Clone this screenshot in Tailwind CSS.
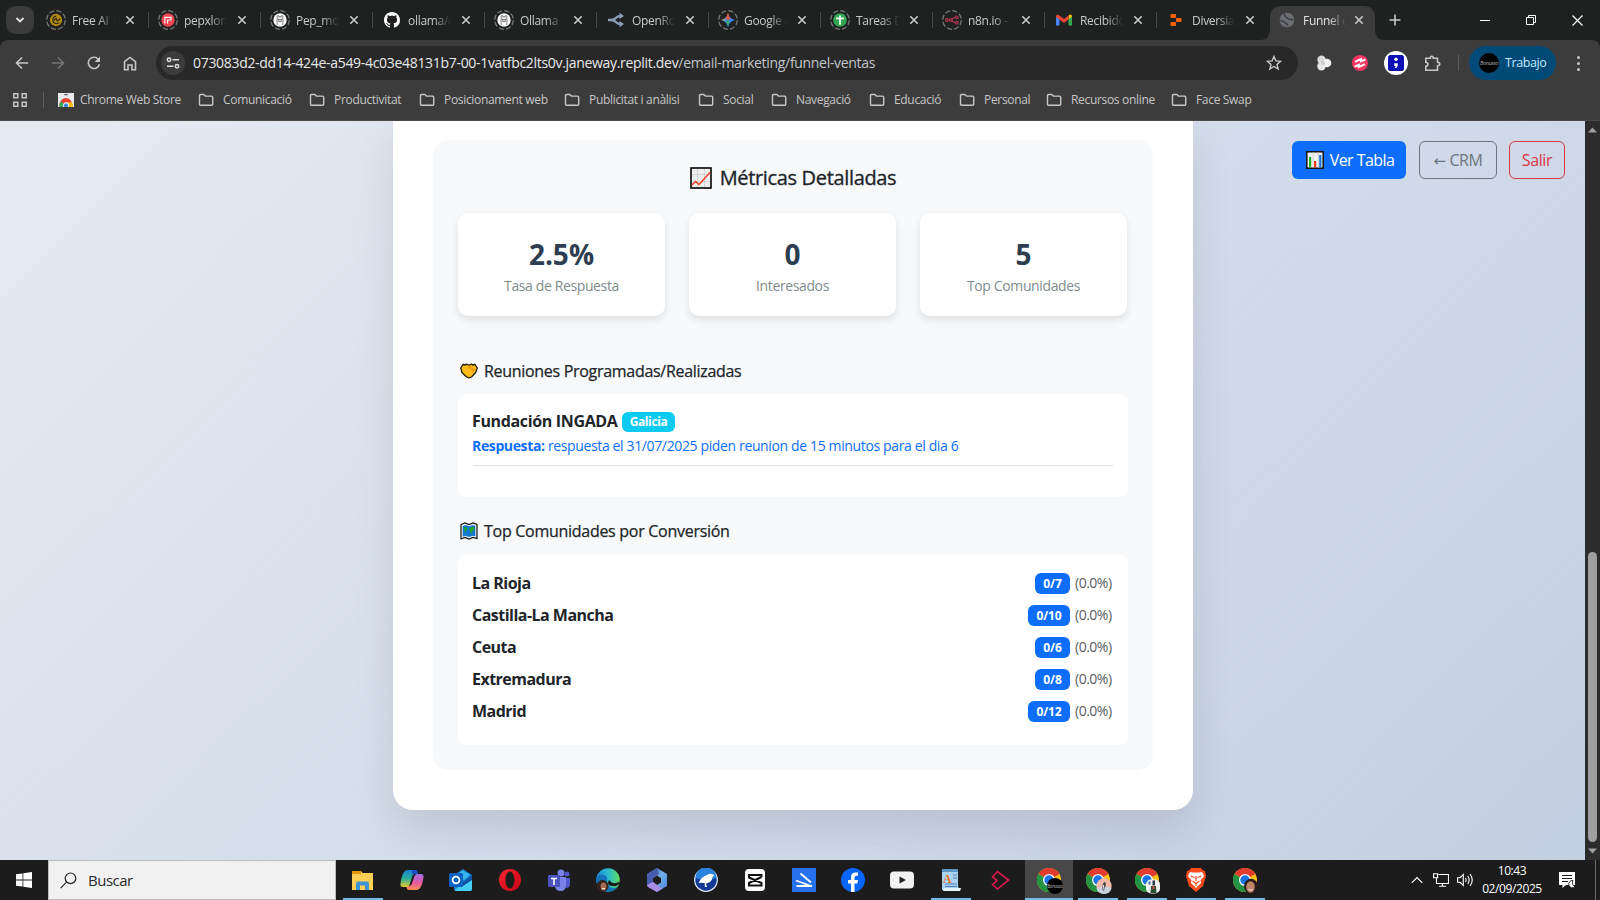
<!DOCTYPE html>
<html lang="es">
<head>
<meta charset="utf-8">
<title>Funnel de Ventas</title>
<script src="https://cdn.jsdelivr.net/npm/@tailwindcss/browser@4"></script>
</head>
<body class="w-[1600px] h-[900px] overflow-hidden flex flex-col font-['Open_Sans',sans-serif] tracking-tight bg-[#3c3c3c]">

<svg class="absolute" width="0" height="0">
  <defs>
    <symbol id="ring" viewBox="0 0 20 20"><circle cx="10" cy="10" r="9.3" fill="none" stroke="#7b7d7c" stroke-width="1.2" stroke-dasharray="5.2 2.1"/></symbol>
    <symbol id="x" viewBox="0 0 10 10"><path d="M1.3 1.3l7.4 7.4M8.7 1.3L1.3 8.7" stroke="currentColor" stroke-width="1.6" fill="none"/></symbol>
    <symbol id="folder" viewBox="0 0 16 14"><path d="M1.500 11.200V2.600Q1.500 1.500 2.600 1.500H5.800L7.400 3.100H13.600Q14.700 3.100 14.700 4.200V11.200Q14.700 12.300 13.600 12.300H2.600Q1.500 12.300 1.500 11.200Z" fill="none" stroke="#c7c7c7" stroke-width="1.400"/></symbol>
    <symbol id="chrome" viewBox="0 0 24 24">
      <circle cx="12" cy="12" r="12" fill="#fbc116"/>
      <path d="M12 12L1.600 6A12 12 0 0 1 22.400 6Z" fill="#e33b2e"/>
      <path d="M1.600 6A12 12 0 0 0 12 24L17.200 15L12 12Z" fill="#229342"/>
      <circle cx="12" cy="12" r="6" fill="#fff"/><circle cx="12" cy="12" r="4.700" fill="#1a73e8"/>
    </symbol>
    <symbol id="llama" viewBox="0 0 16 16"><circle cx="8" cy="8" r="7.600" fill="#fff"/><path d="M4.800 13.500V11Q4 9.500 4.900 7.500Q4.300 3 5.600 2.700Q6.600 2.700 6.700 4.700Q8 4.200 9.300 4.700Q9.400 2.700 10.400 2.700Q11.700 3 11.100 7.500Q12 9.500 11.200 11V13.500" fill="none" stroke="#555" stroke-width=".9"/><ellipse cx="8" cy="8.600" rx="2.200" ry="1.500" fill="none" stroke="#555" stroke-width=".9"/><path d="M8 8.200v.9M5.600 7.200h.8M9.600 7.200h.8" stroke="#333"/></symbol>
    <linearGradient id="gem" x1="0" y1="0" x2="1" y2="1"><stop offset=".2" stop-color="#f0b323"/><stop offset=".45" stop-color="#3f8cf3"/><stop offset="1" stop-color="#2f7bf0"/></linearGradient>
    <linearGradient id="edge" x1="0" y1="0" x2="1" y2="0"><stop offset="0" stop-color="#1a8fdc"/><stop offset=".55" stop-color="#2cc0c8"/><stop offset="1" stop-color="#5fdc5a"/></linearGradient>
    <linearGradient id="m365" x1="0" y1="0" x2="1" y2="1"><stop offset="0" stop-color="#3a4aa8"/><stop offset=".5" stop-color="#6fb0ea"/><stop offset="1" stop-color="#4a7fd8"/></linearGradient>
    <linearGradient id="copA" x1="0" y1="0" x2="0" y2="1"><stop offset="0" stop-color="#1b7fd8"/><stop offset=".5" stop-color="#29b19a"/><stop offset="1" stop-color="#e8c92c"/></linearGradient>
    <linearGradient id="copB" x1="0" y1="0" x2="0" y2="1"><stop offset="0" stop-color="#a070ea"/><stop offset=".55" stop-color="#e85aa0"/><stop offset="1" stop-color="#f7904a"/></linearGradient>
    <linearGradient id="opera" x1="0" y1="0" x2="1" y2="1"><stop offset="0" stop-color="#ff2a3a"/><stop offset=".5" stop-color="#e0101f"/><stop offset="1" stop-color="#c70c1c"/></linearGradient>
  </defs>
</svg>

<!-- Tab strip -->
<div class="h-10 shrink-0 bg-[#1f2120] flex items-stretch text-[#c9cac9]">
  <div class="w-[37px] pl-1.5 pt-1.5"><div class="w-7 h-7 rounded-[9px] bg-[#3a3b3a] flex items-center justify-center"><svg width="10" height="8" viewBox="0 0 10 8"><path d="M1.500 2L5 5.500L8.500 2" fill="none" stroke="#e3e3e3" stroke-width="1.800"/></svg></div></div>
  <div id="tabs" class="flex"></div>
  <div class="w-[26px] ml-[7px] flex items-center justify-center"><svg width="12" height="12" viewBox="0 0 12 12"><path d="M6 .5v11M.5 6h11" stroke="#c9cac9" stroke-width="1.600"/></svg></div>
  <div class="flex-1"></div>
  <div class="flex w-[138px] text-white">
    <div class="w-[46px] flex items-center justify-center"><div class="w-[10px] h-px bg-white"></div></div>
    <div class="w-[46px] flex items-center justify-center"><svg width="10" height="10" viewBox="0 0 10 10" fill="none" stroke="#fff"><path d="M.5 2.500h7v7h-7zM2.500 2.500V.5h7v7h-2"/></svg></div>
    <div class="w-[46px] flex items-center justify-center"><svg width="11" height="11" viewBox="0 0 11 11"><path d="M.5 .5l10 10M10.500 .5l-10 10" stroke="#fff" stroke-width="1.200"/></svg></div>
  </div>
</div>

<!-- Toolbar -->
<div class="bg-[#1f2120] shrink-0"><div class="h-[46px] flex items-center bg-[#3c3c3c] rounded-t-lg">
  <div class="w-[156px] pl-1 flex">
    <div class="w-9 flex justify-center"><svg width="14" height="14" viewBox="0 0 14 14" fill="none" stroke="#c7c7c7" stroke-width="1.600"><path d="M13.200 7H2M7 1.500L1.500 7L7 12.500"/></svg></div>
    <div class="w-9 flex justify-center"><svg width="14" height="14" viewBox="0 0 14 14" fill="none" stroke="#757575" stroke-width="1.600"><path d="M.8 7H12M7 1.500L12.500 7L7 12.500"/></svg></div>
    <div class="w-9 flex justify-center"><svg width="14" height="14" viewBox="0 0 14 14"><path d="M12.400 8.200A5.600 5.600 0 1 1 11 3" fill="none" stroke="#c7c7c7" stroke-width="1.600"/><path d="M13 .6V6H7.600Z" fill="#c7c7c7"/></svg></div>
    <div class="w-9 flex justify-center"><svg width="14" height="15" viewBox="0 0 14 15" fill="none" stroke="#c7c7c7" stroke-width="1.600"><path d="M1.500 13.700V5.700L7 1.400L12.500 5.700V13.700H9V9H5V13.700Z"/></svg></div>
  </div>
  <div class="w-[1142px] h-[34px] rounded-full bg-[#282828] flex items-center pl-[5px] pr-4">
    <div class="w-6 h-6 rounded-full bg-[#3c3c3c] flex items-center justify-center"><svg width="14" height="12" viewBox="0 0 14 12" fill="none" stroke="#dedede" stroke-width="1.500"><circle cx="3" cy="2.700" r="1.700"/><path d="M6.500 2.700H13M1 9.200H7.500"/><circle cx="11" cy="9.200" r="1.700"/></svg></div>
    <div class="ml-2 text-[14px] leading-5 whitespace-nowrap text-[#c2c5c9] tracking-[-0.31px]"><span class="text-[#e8e8e8]">073083d2-dd14-424e-a549-4c03e48131b7-00-1vatfbc2lts0v.janeway.replit.dev</span>/email-marketing/funnel-ventas</div>
    <svg class="ml-auto" width="16" height="16" viewBox="0 0 16 16"><path d="M8 1.500L9.900 5.900L14.600 6.300L11 9.400L12.100 14L8 11.500L3.900 14L5 9.400L1.400 6.300L6.100 5.900Z" fill="none" stroke="#c7c7c7" stroke-width="1.400"/></svg>
  </div>
  <div class="flex items-center pl-2">
    <div class="w-9 flex justify-center"><svg width="16" height="16" viewBox="0 0 16 16"><circle cx="5.500" cy="4.800" r="4.200" fill="#dadada"/><circle cx="5.500" cy="11.200" r="4.200" fill="#e6e6e6"/><circle cx="11" cy="8" r="4.300" fill="#f2f2f2"/><circle cx="7" cy="8" r="2" fill="#c9c9c9"/></svg></div>
    <div class="w-9 flex justify-center"><svg width="16" height="16" viewBox="0 0 16 16"><circle cx="8" cy="8" r="8" fill="#f6365f"/><path d="M3 6.800L9 4V6.300L13.500 4.500M2.500 11.700L7 9.700V12L13 9.200" fill="none" stroke="#fff" stroke-width="2"/></svg></div>
    <div class="w-9 flex justify-center"><div class="w-6 h-6 rounded-full bg-white flex items-center justify-center"><svg width="16" height="16" viewBox="0 0 16 16"><rect width="16" height="16" rx="2.500" fill="#0c10b4"/><circle cx="8" cy="4.300" r="1.700" fill="#fff"/><path d="M6.300 8.300H9.700V10.500Q9.500 13 7 13.300V12Q8 11.700 8 11H6.300Z" fill="#fff"/></svg></div></div>
    <div class="w-9 flex justify-center"><svg width="17" height="17" viewBox="0 0 17 17"><path d="M1.800 3.300H6.300Q6.300 1.300 7.800 1.300T9.300 3.300H13.500V7.300Q15.700 7.300 15.700 9T13.500 10.700V15.200H1.800V11.200Q4 11 4 9.300T1.800 7.300Z" fill="none" stroke="#c7c7c7" stroke-width="1.600"/></svg></div>
  </div>
  <div class="w-px h-4 bg-[#5e5e5e] ml-2"></div>
  <div class="ml-[10px] w-[87px] h-[34px] rounded-full bg-[#004a77] flex items-center pl-2.5">
    <div class="w-5 h-5 rounded-full bg-black flex items-center justify-center text-[5.500px] italic text-[#aaa]">Bonusso</div>
    <div class="ml-1.5 text-[12.500px] leading-4 text-[#c2e7ff] tracking-[-0.4px]">Trabajo</div>
  </div>
  <div class="flex flex-col gap-[3px] ml-[21px]"><i class="w-[3px] h-[3px] rounded-full bg-[#c7c7c7]"></i><i class="w-[3px] h-[3px] rounded-full bg-[#c7c7c7]"></i><i class="w-[3px] h-[3px] rounded-full bg-[#c7c7c7]"></i></div>
</div></div>

<!-- Bookmarks bar -->
<div class="h-[35px] shrink-0 flex items-center pb-[7px] border-b border-[#4a4a4a] text-[12px] text-[#c7c7c7] whitespace-nowrap">
  <div class="w-[43px] pl-[13px]"><svg width="14" height="14" viewBox="0 0 14 14" fill="none" stroke="#c7c7c7" stroke-width="1.500"><path d="M.8 .8h4v4h-4zM9.200 .8h4v4h-4zM.8 9.200h4v4h-4zM9.200 9.200h4v4h-4z"/></svg></div>
  <div class="w-[15px]"><div class="w-px h-4 bg-[#5e5e5e]"></div></div>
  <div class="w-[140px] flex items-center gap-[6px] tracking-[-0.32px]"><svg width="16" height="14" viewBox="0 0 16 14"><rect width="16" height="14" fill="#e8eaed"/><rect x="6" y="1" width="4" height="1.200" rx=".6" fill="#5f6368"/><path d="M1.500 14A6.500 7.500 0 0 1 14 10L8 9.500Z" fill="#ea4335"/><path d="M1.500 14A7 7 0 0 1 3.500 8L7 14Z" fill="#34a853"/><path d="M9 9.500h5.200q.8 2 .8 4.500H9Z" fill="#fbbc04"/><circle cx="8" cy="12.500" r="2.700" fill="#4285f4" stroke="#fff"/></svg>Chrome Web Store</div>
  <div id="bookmarks" class="flex"></div>
</div>

<!-- Page viewport -->
<div class="h-[739px] shrink-0 flex">
  <main class="w-[1585px] h-full relative overflow-hidden flex justify-center items-start bg-[linear-gradient(135deg,#f5f7fa_0%,#c3cfe2_100%)] bg-[length:1585px_1800px] bg-bottom text-[#212529] tracking-normal">
    <div class="w-[800px] ml-px h-[689px] bg-white rounded-b-[20px] shadow-[0_20px_40px_rgba(0,0,0,0.1)] px-10 pt-[19px]">
      <section class="h-[630px] rounded-[15px] bg-[#f8f9fa] p-[25px] flex flex-col">
        <h5 class="h-6 flex items-center justify-center gap-2 text-[20px] font-medium leading-6 mt-px"><svg width="22" height="22" viewBox="0 0 22 22"><rect x="1" y="1" width="20" height="20" fill="#efefef" stroke="#111" stroke-width="1.700"/><path d="M7.500 2v18M14.500 2v18M2 7.500h18M2 14.500h18" stroke="#d2d2d2"/><path d="M2 18L5.500 14.500L9 17.500L20 5.500" fill="none" stroke="#f03a17" stroke-width="1.300"/></svg><span class="tracking-[-0.34px] [-webkit-text-stroke:0.35px]">Métricas Detalladas</span></h5>
        <div class="grid grid-cols-3 gap-6 mt-[23px] w-[669px]">
          <div class="h-[103px] rounded-[10px] bg-white shadow-[0_4px_8px_rgba(0,0,0,0.1)] pt-5 text-center"><div class="text-[28px] leading-[42px] font-bold text-[#2c3e50]">2.5%</div><div class="text-[14px] leading-[22px] text-[#7f8c8d] tracking-[-0.38px]">Tasa de Respuesta</div></div>
          <div class="h-[103px] rounded-[10px] bg-white shadow-[0_4px_8px_rgba(0,0,0,0.1)] pt-5 text-center"><div class="text-[28px] leading-[42px] font-bold text-[#2c3e50]">0</div><div class="text-[14px] leading-[22px] text-[#7f8c8d] tracking-[-0.38px]">Interesados</div></div>
          <div class="h-[103px] rounded-[10px] bg-white shadow-[0_4px_8px_rgba(0,0,0,0.1)] pt-5 text-center"><div class="text-[28px] leading-[42px] font-bold text-[#2c3e50]">5</div><div class="text-[14px] leading-[22px] text-[#7f8c8d] tracking-[-0.38px]">Top Comunidades</div></div>
        </div>
        <h6 class="mt-[45px] h-5 flex items-center gap-[6px] text-[16px] font-medium leading-5 pl-[2px]"><svg width="18" height="16" viewBox="0 0 18 16"><path d="M.7 5L3.200 1.200L5 2.300L6.500 1L9 2.300L11.500 1L13 2.300L14.800 1.200L17.300 5L15.700 9.500L11.500 14L9 15L6 13.500L2 9.500Z" fill="#fcbc1b" stroke="#1c1500" stroke-width="1.200" stroke-linejoin="round"/><path d="M9 3L15.500 6L13 9L9.500 5L7 6Z" fill="#f29b0c"/></svg><span class="tracking-[-0.3px] [-webkit-text-stroke:0.25px]">Reuniones Programadas/Realizadas</span></h6>
        <div class="mt-[13px] h-[103px] w-[670px] rounded-lg bg-white px-[15px] pt-[15px]">
          <div class="h-6 flex items-center"><b class="text-[16px] leading-6 tracking-[-0.35px] w-[150px] -ml-px whitespace-nowrap">Fundación INGADA</b><span class="w-[53px] h-5 mt-0.5 rounded-md bg-[#0dcaf0] text-white text-[12px] leading-5 font-bold text-center tracking-[-0.4px]">Galicia</span></div>
          <div class="text-[14px] leading-[21px] mt-[2px] -ml-px text-[#0d6efd] tracking-[-0.365px] whitespace-nowrap"><b>Respuesta:</b> respuesta el 31/07/2025 piden reunion de 15 minutos para el dia 6</div>
          <div class="mt-[9px] h-px bg-[#dee2e6]"></div>
        </div>
        <h6 class="mt-6 h-5 flex items-center gap-[6px] text-[16px] font-medium leading-5 pl-[2px]"><svg width="18" height="18" viewBox="0 0 18 18"><path d="M1 2.500L5 1L9 2.500L13 1L17 2.500V16.500L13 15.500L9 17L5 15.500L1 17Z" fill="#f4f4f4" stroke="#111" stroke-width="1.200"/><path d="M2.700 4L5.500 3L9 4.300L13 3L15.300 4V14.500L13 13.800L9 15L5 13.800L2.700 14.700Z" fill="#1277d3"/><path d="M4 5L7.500 5.500L7 8L5.500 9L6.500 12L4.500 9ZM9 6L14 4.500L14.500 8L12 9L12.500 12L10.500 11L10 8.500Z" fill="#1fa32c"/></svg><span class="tracking-[-0.28px] [-webkit-text-stroke:0.25px]">Top Comunidades por Conversión</span></h6>
        <div id="comunidades" class="mt-[14px] h-[190px] w-[670px] rounded-lg bg-white px-[15px] pt-3"></div>
      </section>
    </div>
    <div class="absolute right-5 top-5 flex h-[38px] text-[16px] leading-9 text-center whitespace-nowrap">
      <div class="w-[114px] pl-[2px] rounded-md bg-[#0d6efd] text-white flex items-center justify-center gap-1.5"><svg width="18" height="18" viewBox="0 0 18 18"><rect x=".8" y=".8" width="16.400" height="16.400" fill="#f3f3f3" stroke="#111" stroke-width="1.500"/><path d="M7 1.500v15M12.500 1.500v15" stroke="#d5d5d5"/><path d="M3 6h2.200v10.500H3z" fill="#16b31a"/><path d="M8 10h2.200v6.500H8z" fill="#f03a17"/><path d="M13.200 4h2.200v12.500h-2.200z" fill="#1673d8"/></svg><span class="tracking-[-0.55px]">Ver Tabla</span></div>
      <div class="w-[78px] ml-[13px] rounded-md border border-[#6c757d] text-[#6c757d] tracking-[-0.4px]"><span class="font-['DejaVu_Sans'] text-[15px]">←</span> CRM</div>
      <div class="w-[56px] ml-3 rounded-md border border-[#dc3545] text-[#dc3545] tracking-[-0.4px]">Salir</div>
    </div>
  </main>
  <div class="w-[15px] h-full bg-[#2c2c2c] flex flex-col items-center justify-between py-[6px]">
    <svg width="9" height="6" viewBox="0 0 9 6"><path d="M0 5.500L4.500 .5L9 5.500Z" fill="#9f9f9f"/></svg>
    <div class="flex-1 w-full flex flex-col items-center justify-end pb-[6px]"><div class="w-[9px] h-[290px] rounded-full bg-[#9f9f9f]"></div></div>
    <svg width="9" height="6" viewBox="0 0 9 6"><path d="M0 .5L4.500 5.500L9 .5Z" fill="#9f9f9f"/></svg>
  </div>
</div>

<!-- Taskbar -->
<div class="h-10 shrink-0 bg-[#1c1c1c] flex">
  <div class="w-12 flex items-center justify-center"><svg width="16" height="16" viewBox="0 0 16 16" fill="#fff"><path d="M0 2.300L6.500 1.400V7.600H0zM7.300 1.300L16 0V7.600H7.300zM0 8.400H6.500V14.600L0 13.700zM7.300 8.400H16V16L7.300 14.700z"/></svg></div>
  <div class="w-[288px] h-10 bg-[#f1f1f1] border border-[#bdbdbd] flex items-center pl-[11px] text-[15px] text-[#2b2b2b] tracking-[-0.5px]"><svg class="mr-[11px]" width="17" height="17" viewBox="0 0 17 17" fill="none" stroke="#222" stroke-width="1.200"><circle cx="10.500" cy="6.300" r="5.300"/><path d="M6.600 10.200L.6 16.200"/></svg>Buscar</div>
  <div id="apps" class="flex gap-px ml-[3px]"></div>
  <div class="flex-1"></div>
  <div class="flex items-center text-white">
    <svg width="12" height="8" viewBox="0 0 12 8"><path d="M.7 6.800L6 1.500L11.300 6.800" fill="none" stroke="#fff" stroke-width="1.200"/></svg>
    <svg class="ml-[10px]" width="16" height="14" viewBox="0 0 16 14" fill="none" stroke="#fff" stroke-width="1.100"><path d="M5.500 1.500H15.500V10.500H3.500V5M.6 .8H4.600V4.800H.6zM9.500 10.500V13M6 13.300H13"/></svg>
    <svg class="ml-2" width="17" height="14" viewBox="0 0 17 14" fill="none" stroke="#fff" stroke-width="1.100"><path d="M.6 4.700H3L6.300 1.500V12.500L3 9.300H.6ZM8.500 5Q9.800 7 8.500 9M10.800 3Q13.500 7 10.800 11M13 1Q17.500 7 13 13"/></svg>
    <div class="w-[62px] ml-[7px] flex flex-col items-center text-[12px] leading-[18px] tracking-[-0.4px]"><span>10:43</span><span>02/09/2025</span></div>
    <svg class="ml-[16px]" width="18" height="17" viewBox="0 0 18 17"><path d="M0 0H16V13H7L3.500 16V13H0Z" fill="#fff"/><path d="M3 3.500h10M3 6.500h10M3 9.500h6" stroke="#1c1c1c" stroke-width="1.200"/><path d="M14 8.500a3.700 3.700 0 1 0 2 6.300a4.500 4.500 0 0 1-2-6.300" fill="#fff" stroke="#1c1c1c" stroke-width=".9"/></svg>
    <div class="w-px h-10 bg-[#6a6a6a] ml-[18px] mr-1"></div>
  </div>
</div>

<script>
const ringed = (s) => '<svg class="absolute -left-0.5 -top-0.5" width="20" height="20"><use href="#ring"/></svg><div class="scale-[.88]">' + s + '</div>';
const tabs = [
  ['Free AI |', ringed('<svg width="16" height="16" viewBox="0 0 16 16"><circle cx="8" cy="8" r="7" fill="#b48a08"/><path d="M8.500 3.500A4.300 4.300 0 1 0 11.500 11M5.500 8.500L8 6L9.500 9L13 6.500" fill="none" stroke="#2b2500" stroke-width="1.300"/></svg>')],
  ['pepxlora', ringed('<svg width="16" height="16" viewBox="0 0 16 16"><circle cx="8" cy="8" r="7.600" fill="#ef4452"/><path d="M4.500 12V5H12M7.500 12V8H11.500V5" fill="none" stroke="#fff" stroke-width="1.300"/></svg>')],
  ['Pep_mod', ringed('<svg width="16" height="16"><use href="#llama"/></svg>')],
  ['ollama/o', '<svg width="16" height="16" viewBox="0 0 16 16"><path fill="#fff" d="M8 0C3.580 0 0 3.580 0 8c0 3.540 2.290 6.530 5.470 7.590.4.070.55-.17.55-.38 0-.19-.010-.82-.010-1.490-2.010.37-2.530-.49-2.690-.94-.09-.23-.48-.94-.82-1.130-.28-.15-.68-.52-.010-.53.63-.010 1.080.58 1.230.82.72 1.210 1.870.87 2.330.66.070-.52.28-.87.51-1.070-1.780-.2-3.640-.89-3.640-3.950 0-.87.31-1.590.82-2.150-.08-.2-.36-1.020.08-2.120 0 0 .67-.21 2.200.82.64-.18 1.320-.27 2-.27s1.360.09 2 .27c1.530-1.040 2.200-.82 2.200-.82.44 1.100.16 1.920.08 2.120.51.56.82 1.270.82 2.150 0 3.070-1.870 3.750-3.650 3.950.29.25.54.73.54 1.480 0 1.070-.010 1.930-.010 2.200 0 .21.15.46.55.38A8.010 8.010 0 0 0 16 8c0-4.420-3.580-8-8-8"/></svg>'],
  ['Ollama |', ringed('<svg width="16" height="16"><use href="#llama"/></svg>')],
  ['OpenRou', '<svg width="16" height="16" viewBox="0 0 16 16"><path d="M0 8H3Q6 8 8.500 5.500Q10 4 12.500 4M3 8Q6 8 8.500 10.500Q10 12 12.500 12" fill="none" stroke="#8e9fbc" stroke-width="2.300"/><path d="M11.500 .8L16 4L11.500 7ZM11.500 9L16 12L11.500 15.200Z" fill="#8e9fbc"/></svg>'],
  ['Google A', ringed('<svg width="16" height="16" viewBox="0 0 16 16"><path d="M8 0Q9.500 6.500 16 8Q9.500 9.500 8 16Q6.500 9.500 0 8Q6.500 6.500 8 0" fill="url(#gem)"/><path d="M8 0Q9 5 11 6.700L8 8L5.500 6.200Q7.300 4 8 0" fill="#ea5044"/><path d="M8 16Q7.200 11.500 5.500 9.800L8 8L10 10Q8.700 12 8 16" fill="#3aa657"/></svg>')],
  ['Tareas D', ringed('<svg width="16" height="16" viewBox="0 0 16 16"><circle cx="8" cy="8" r="7.800" fill="#2fa84f"/><path d="M8 3V13.500M3.500 6.200H12.500" stroke="#fff" stroke-width="2"/></svg>')],
  ['n8n.io - A', ringed('<svg width="16" height="16" viewBox="0 0 16 16" fill="none" stroke="#b0334f" stroke-width="1.400"><circle cx="2" cy="8" r="1.500"/><circle cx="6.500" cy="8" r="1.500"/><circle cx="13.500" cy="5" r="1.500"/><circle cx="13.500" cy="11" r="1.500"/><path d="M3.500 8h1.500M8 8Q9 5 12 5M8 8Q9 11 12 11"/></svg>')],
  ['Recibidos', '<svg width="16" height="16" viewBox="0 0 16 16"><path d="M0 3.500V13.500H3.500V6Z" fill="#4285f4"/><path d="M16 3.500V13.500H12.500V6Z" fill="#34a853"/><path d="M12.500 3.500L14 2.500Q16 2.500 16 4.500L12.500 7.500Z" fill="#fbbc04"/><path d="M0 4.500Q0 2.500 2 2.500L8 7L12.500 3.500V7.500L8 11L3.500 7.500L0 5Z" fill="#ea4335"/></svg>'],
  ['Diversia', '<svg width="16" height="16" viewBox="0 0 16 16" fill="#f26207"><rect x="2.500" y="2" width="5.500" height="4" rx=".8"/><rect x="8" y="6" width="5.500" height="4" rx=".8"/><rect x="2.500" y="10" width="5.500" height="4" rx=".8"/></svg>'],
  ['Funnel d', '<svg width="16" height="16" viewBox="0 0 16 16"><circle cx="8" cy="8" r="7.300" fill="#6b6e72"/><path d="M1.500 9Q5 8.500 6 11Q8.500 11 8.500 14M5.500 1.500Q5.500 5 8 5.500Q9 8 14.500 7.500" fill="none" stroke="#3f4144" stroke-width="1.700"/></svg>'],
];
document.getElementById('tabs').innerHTML = tabs.map(([t, icon], i) => {
  const active = i === 11;
  return `<div class="${active ? 'relative w-[105px] ml-px mt-1.5 rounded-t-[10px] bg-[#3c3c3c] pl-[9px] pb-1.5 flex items-center' : 'relative w-28 pl-[11px] flex items-center'}">
    <div class="relative w-4 h-4 shrink-0">${icon}</div>
    <div class="w-[43px] ml-2 overflow-hidden whitespace-nowrap text-[12px] leading-4 mt-px tracking-[-0.3px] mask-r-from-60% ${active ? 'text-[#e3e3e3]' : ''}">${t}</div>
    <svg class="shrink-0 ${active ? 'ml-2' : 'ml-[10px]'}" width="10" height="10"><use href="#x"/></svg>
    ${active ? '<svg class="absolute -left-2.5 bottom-0" width="10" height="10"><path d="M10 0V10H0Q10 10 10 0" fill="#3c3c3c"/></svg><svg class="absolute -right-2.5 bottom-0" width="10" height="10"><path d="M0 0V10H10Q0 10 0 0" fill="#3c3c3c"/></svg>' : i < 10 ? '<div class="absolute right-0 top-3 w-px h-4 bg-[#454746]"></div>' : ''}
  </div>`;
}).join('');

const marks = [['Comunicació',111],['Productivitat',110],['Posicionament web',145],['Publicitat i anàlisi',134],['Social',73],['Navegació',98],['Educació',90],['Personal',87],['Recursos online',125],['Face Swap',100]];
document.getElementById('bookmarks').innerHTML = marks.map(([t, w]) =>
  `<div class="flex items-center gap-[9px] tracking-[-0.32px]" style="width:${w}px"><svg width="16" height="14"><use href="#folder"/></svg>${t}</div>`).join('');

document.getElementById('comunidades').innerHTML = [['La Rioja','0/7'],['Castilla-La Mancha','0/10'],['Ceuta','0/6'],['Extremadura','0/8'],['Madrid','0/12']].map(([n, v]) =>
  `<div class="h-8 flex items-center"><b class="text-[16px] leading-6 tracking-[-0.52px] -ml-px -mt-px">${n}</b><span class="ml-auto mr-[5px] mt-px h-[21px] rounded-md bg-[#0d6efd] text-white text-[12px] leading-[21px] font-bold text-center tracking-[-0.1px] ${v.length > 3 ? 'w-[42px]' : 'w-[35px]'}">${v}</span><span class="w-[38px] text-[14px] leading-5 text-[#595c5f] tracking-[-0.5px] whitespace-nowrap">(0.0%)</span></div>`).join('');

const svg = (s) => `<svg width="24" height="24" viewBox="0 0 24 24">${s}</svg>`;
const chrome = (badge) => `<svg class="overflow-visible" width="24" height="24" viewBox="0 0 24 24"><use href="#chrome"/>${badge}</svg>`;
const apps = [
  [svg('<path d="M1 3h9l1.500 2H22v17H1z" fill="#ffcf55"/><path d="M1 3h9v3H1z" fill="#e09a09"/><path d="M5 22v-6.500q0-2 2-2h9q2 0 2 2V22h-4v-4.500H9V22z" fill="#3d95d8"/>'), 1],
  [svg('<path d="M16 22H9q-2 0-2.300-2L6 18h3q2 0 2.700-2L14.500 8q.8-2 3-2H21q3 0 2.500 3.500Q22 19 19 21Q18 22 16 22" fill="url(#copB)"/><path d="M8 2h7q2 0 2.500 2l.5 2h-3q-2 0-2.700 2L9.500 17q-.8 2-3 2H3q-3 0-2.500-3.500Q2 5 5 3Q6 2 8 2" fill="url(#copA)"/><path d="M15 2q2 0 2.500 2l.5 2h-3q-1.500 0-2.200 1L11.500 2z" fill="#1a50c4"/>')],
  [svg('<path d="M5 7L14 1L23 7V21Q23 23 21 23H7Q5 23 5 21Z" fill="#1684d6"/><path d="M8 6L14 2.500L21 7L15 12Z" fill="#37b6ef"/><path d="M23 9L11 18Q6 21 6 23H21Q23 23 23 21Z" fill="#45cdf6"/><path d="M13 15L23 7V12L14 18Z" fill="#1153a3"/><rect y="5" width="14" height="14" rx="1.500" fill="#0b62c0"/><circle cx="7" cy="12" r="3.400" fill="none" stroke="#fff" stroke-width="1.800"/>')],
  [svg('<path fill-rule="evenodd" d="M12 1a11 11 0 1 0 0 22a11 11 0 1 0 0-22M12 3.500c-6 1-6 16 0 17c6-1 6-16 0-17" fill="url(#opera)"/>')],
  [svg('<circle cx="14" cy="5" r="3.500" fill="#7b83eb"/><circle cx="20" cy="6" r="2.500" fill="#5059c9"/><path d="M17 10h6v6q0 4-4 4z" fill="#5059c9"/><path d="M8 9h11v8q0 6-5.500 6T8 17z" fill="#7b83eb"/><rect x="1" y="7" width="12" height="12" rx="1.200" fill="#4b53bc"/><path d="M4 10.500h6M7 10.500v6.500" stroke="#fff" stroke-width="1.600"/>')],
  [svg('<circle cx="12" cy="12" r="11.800" fill="url(#edge)"/><path d="M.3 12Q1 5 7 6.500Q12 8 11 12Q10 17 14 19Q18 21 21.500 19Q17 25 9 23Q1 20 .3 12" fill="#1573be"/><path d="M12 14.500q1-4 2.500-1q3 3.500 9.300 0q-1 5.500-7 4.500q-5 0-4.800-3.500" fill="#1c1c1c"/><circle cx="6.500" cy="18" r="6" fill="#31221d"/><ellipse cx="7.500" cy="18.500" rx="3" ry="4" fill="#a56a50"/><path d="M6 20h3v1.200H6z" fill="#eee"/>')],
  [svg('<path d="M12 0L22 6V18L12 24L2 18V6ZM12 7.500L8 10V14.500L12 17L16 14.500V10Z" fill-rule="evenodd" fill="url(#m365)"/><path d="M12 0L2 6V17L8 14V10L14 6Z" fill="#485aad"/><path d="M2 17L8 14L12 17L17 20.500L12 24L3 19Z" fill="#a78be6"/>')],
  [svg('<circle cx="12" cy="12" r="11.300" fill="#123a94" stroke="#e5edf8" stroke-width="1.200"/><path d="M1.500 10A10.500 10.500 0 0 1 22.500 10Q12 14 1.500 10" fill="#2a82df"/><path d="M4.500 15Q7 9 13 7Q16 5 17.500 6L20.500 7L18.500 9Q18 14 13.500 15L12 15.500L13 19H11L10.500 15Q7 14.500 4.500 15" fill="#fff"/>')],
  [svg('<rect x="2" y="1" width="20" height="22" rx="4" fill="#fff"/><path d="M18.500 9V7H6v2.500L18.500 15v2.500H6V15L18.500 9" fill="none" stroke="#111" stroke-width="2"/>')],
  [svg('<rect width="24" height="24" fill="#2671ed"/><path d="M8.500 5.500L19 14.500M4 12.500L19 18M4.500 18H20" fill="none" stroke="#fff" stroke-width="1.800"/>')],
  [svg('<circle cx="12" cy="12" r="12" fill="#0866ff"/><path d="M10 24V15.500H7V12h3V9.500q0-5 4.500-5h2.500v3.200h-1.700q-1.800 0-1.800 2V12H17l-.6 3.500h-2.900V24z" fill="#fff"/>')],
  [svg('<rect y="3.500" width="24" height="17" rx="4" fill="#f1f1f1"/><path d="M9.500 8.500L16 12L9.500 15.500Z" fill="#222"/>')],
  [svg('<path d="M3 1h16v18l3 3H3z" fill="#a9d3f0"/><path d="M3 1h16v3H3z" fill="#5b96c5"/><path d="M5 20h17l-1 3H4z" fill="#e9f3fa"/><path d="M14 7h4M14 10h4M6 16h12M6 18.500h12" stroke="#4880b5"/><text x="4" y="15" font-family="Liberation Serif" font-weight="bold" font-size="12" fill="#ed7418">A</text>'), 1],
  [svg('<path d="M4.500 9L9.500 3.500L20.500 12L9.500 21L4.500 16.500L9 12.500Z" fill="none" stroke="#e2174f" stroke-width="1.600"/>')],
  [chrome('<circle cx="18" cy="18" r="8" fill="#000"/><text x="18" y="20" font-size="4.500" text-anchor="middle" fill="#bbb">Bonusso</text>'), 2],
  [chrome('<circle cx="18" cy="18" r="7.700" fill="#f2b8a8"/><path d="M10.500 20A7.700 7.700 0 0 0 25.500 20L18 18Z" fill="#cad3de"/><path d="M16.500 22Q16 15 18.500 14Q20.500 14 19.500 18L18 23" fill="#444"/><path d="M17.500 17l.5 5" stroke="#eee"/>'), 1],
  [chrome('<rect x="11" y="11.500" width="14" height="14" rx="5" fill="#f1f1f1"/><path d="M13.500 13.500h2v3h-2z" fill="#3b6ea8"/><path d="M17.500 12.500h2.500v5h-2.500z" fill="#26384b"/><path d="M16 18h5l.5 7h-6z" fill="#2d5038"/><path d="M17.500 18h2v3h-2z" fill="#c44"/>'), 1],
  [svg('<path d="M7 0H17L19 2.500L21 3L22 8L19 18L12 24L5 18L2 8L3 3L5 2.500Z" fill="#fb4a1d"/><path d="M6 4L9.500 4.500H14.500L18 4L20 8L16.500 12.500L17 15L12 20L7 15L7.500 12.500L4 8Z" fill="#fff"/><path d="M6.500 8L10.500 9.500M17.500 8L13.500 9.500M12 8v5M8.500 13L12 15.500L15.500 13M12 15.500V18" stroke="#fb4a1d" stroke-width="1.200" fill="none"/>'), 1],
  [chrome('<ellipse cx="18" cy="18.500" rx="7" ry="7.700" fill="#2b1c18"/><ellipse cx="17.500" cy="19" rx="4.300" ry="5.800" fill="#bd8467"/><path d="M15.500 21.500q2 1.500 4 0" stroke="#fff" fill="none"/>'), 1],
];
document.getElementById('apps').innerHTML = apps.map(([icon, state]) =>
  `<div class="w-12 h-10 flex flex-col items-center ${state === 2 ? 'bg-[#484848]' : ''}"><div class="h-[38px] pt-2">${icon}</div>${state ? `<div class="h-0.5 bg-[#76b9ed] ${state === 2 ? 'w-12' : 'w-10'}"></div>` : ''}</div>`).join('');
</script>
</body>
</html>
